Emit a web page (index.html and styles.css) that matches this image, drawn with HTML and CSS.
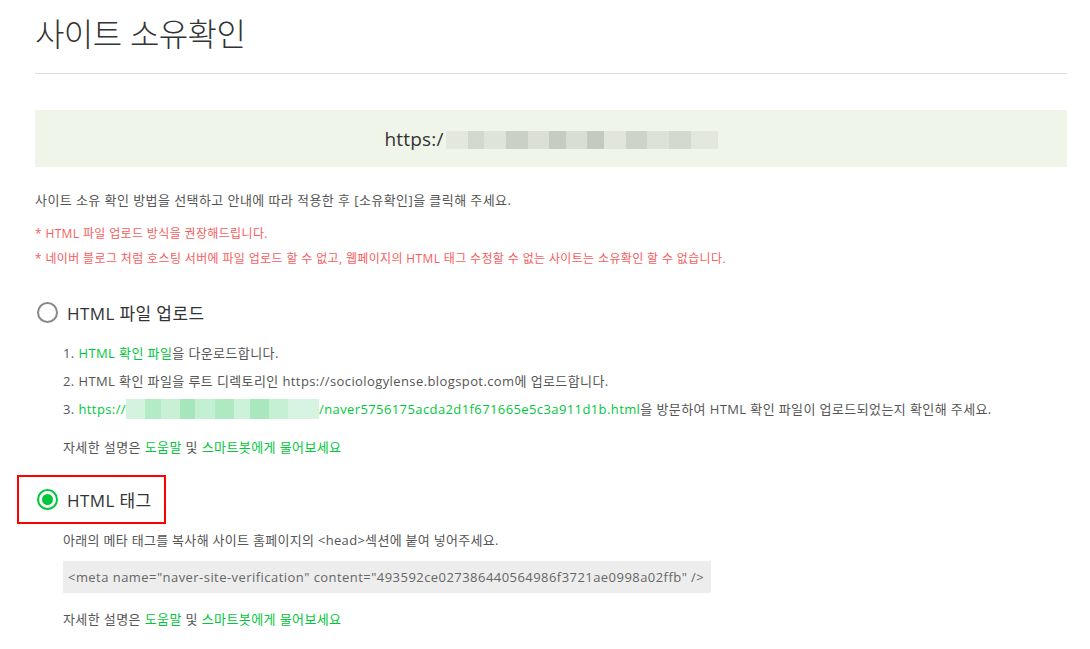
FILE: index.html
```html
<!DOCTYPE html>
<html lang="ko">
<head>
<meta charset="utf-8">
<title>사이트 소유확인</title>
<link rel="stylesheet" href="styles.css">
</head>
<body>
<div class="page">
  <h1 class="title">사이트 소유확인</h1>
  <div class="rule"></div>
  <div class="site-box">
    <span class="site-url">https:/</span><span class="blur blur-gray"></span>
  </div>
  <p class="intro">사이트 소유 확인 방법을 선택하고 안내에 따라 적용한 후 [소유확인]을 클릭해 주세요.</p>
  <p class="warn">* HTML 파일 업로드 방식을 권장해드립니다.</p>
  <p class="warn warn-2">* 네이버 블로그 처럼 호스팅 서버에 파일 업로드 할 수 없고, 웹페이지의 HTML 태그 수정할 수 없는 사이트는 소유확인 할 수 없습니다.</p>

  <section class="method">
    <div class="option">
      <span class="radio"></span>
      <span class="option-label">HTML 파일 업로드</span>
    </div>
    <ol class="steps">
      <li>1. <span class="green">HTML 확인 파일</span>을 다운로드합니다.</li>
      <li>2. HTML 확인 파일을 루트 디렉토리인 https://sociologylense.blogspot.com에 업로드합니다.</li>
      <li>3. <span class="green">https://<span class="blur blur-green"></span>/naver5756175acda2d1f671665e5c3a911d1b.html</span>을 방문하여 HTML 확인 파일이 업로드되었는지 확인해 주세요.</li>
    </ol>
    <p class="help">자세한 설명은 <span class="green">도움말</span> 및 <span class="green">스마트봇에게 물어보세요</span></p>
  </section>

  <section class="method method-2">
    <div class="option option-selected">
      <span class="radio radio-on"></span>
      <span class="option-label">HTML 태그</span>
    </div>
    <p class="desc">아래의 메타 태그를 복사해 사이트 홈페이지의 &lt;head&gt;섹션에 붙여 넣어주세요.</p>
    <div class="code">&lt;meta name="naver-site-verification" content="493592ce027386440564986f3721ae0998a02ffb" /&gt;</div>
    <p class="help help-2">자세한 설명은 <span class="green">도움말</span> 및 <span class="green">스마트봇에게 물어보세요</span></p>
  </section>
</div>
</body>
</html>
```

FILE: styles.css
```css
* { box-sizing: border-box; }
html, body { margin: 0; padding: 0; background: #fff; }
body {
  font-family: "Open Sans", "Noto Sans CJK KR", sans-serif;
  color: #555;
  overflow: hidden;
}
.page {
  width: 1090px;
  padding: 0 23px 0 35px;
}
.title {
  margin: 0;
  padding-top: 12px;
  height: 56px;
  font-family: "Noto Sans CJK KR", sans-serif;
  font-size: 32px;
  font-weight: 300;
  color: #333;
  line-height: 40px;
  letter-spacing: -0.6px;
}
.rule {
  margin-top: 17px;
  height: 1px;
  background: #dcdcdc;
}
.site-box {
  margin-top: 36px;
  height: 57px;
  background: #f0f5e9;
  display: flex;
  align-items: center;
  justify-content: center;
}
.site-url {
  font-size: 19px;
  color: #333;
  letter-spacing: 0.2px;
}
.blur {
  display: inline-block;
  vertical-align: middle;
}
.blur-gray {
  width: 272px;
  height: 18px;
  margin-top: 2px;
  margin-left: 2px;
  background:
    linear-gradient(90deg, #e2e6dc 0 8%, #cfd5c9 8% 14%, #dde1d7 14% 22%, #c6ccbf 22% 30%, #d9ddd3 30% 38%, #c1c7bb 38% 44%, #d6dad0 44% 52%, #bfc5b9 52% 58%, #dfe3d9 58% 66%, #c9cfc3 66% 74%, #dadfd4 74% 82%, #d0d5ca 82% 90%, #e1e5db 90% 100%);
  opacity: 0.9;
}
.blur-green {
  width: 193px;
  height: 20px;
  vertical-align: -5px;
  background:
    linear-gradient(90deg, #d4f3df 0 10%, #b3ebc6 10% 18%, #c8f0d5 18% 28%, #a6e6bc 28% 36%, #c3efd2 36% 46%, #aee9c2 46% 56%, #cdf2da 56% 64%, #a9e8bf 64% 74%, #c6f0d4 74% 84%, #d6f4e1 84% 100%);
}
.intro {
  margin: 24px 0 0;
  font-size: 13px;
  line-height: 18px;
  color: #555;
  letter-spacing: 0.43px;
}
.warn {
  margin: 17px 0 0;
  font-size: 12px;
  line-height: 16px;
  color: #f75d5d;
  letter-spacing: 0.36px;
}
.warn-2 { margin-top: 9px; }
.method { margin-top: 32px; }
.option {
  display: flex;
  align-items: center;
  height: 26px;
  gap: 9px;
  padding-left: 2px;
}
.radio {
  width: 21px;
  height: 21px;
  border-radius: 50%;
  border: 2px solid #888;
  display: flex;
  align-items: center;
  justify-content: center;
}
.radio-on { border-color: #00c73c; }
.radio-on::after {
  content: "";
  width: 11px;
  height: 11px;
  border-radius: 50%;
  background: #00c73c;
}
.option-label {
  font-size: 17px;
  color: #333;
  letter-spacing: 0.4px;
}
.steps {
  list-style: none;
  margin: 14px 0 0;
  padding: 0 0 0 28px;
}
.steps li {
  font-size: 13px;
  line-height: 28px;
  color: #555;
  letter-spacing: 0.4px;
}
.green { color: #00c73c; }
.help {
  margin: 15px 0 0 28px;
  font-size: 13px;
  line-height: 18px;
  color: #555;
  letter-spacing: 0.4px;
}
.method-2 {
  margin-top: 19px;
}
.option-selected {
  margin-left: -18px;
  width: 149px;
  height: 49px;
  border: 2px solid #f00;
  padding-left: 18px;
}
.desc {
  margin: 7px 0 0 28px;
  font-size: 13px;
  line-height: 18px;
  color: #555;
  letter-spacing: 0.3px;
}
.code {
  margin: 12px 0 0 28px;
  width: 648px;
  height: 32px;
  background: #ededed;
  padding-left: 5px;
  font-size: 13px;
  line-height: 32px;
  color: #666;
  letter-spacing: 0.45px;
}
.help-2 { margin-top: 17px; }
```
